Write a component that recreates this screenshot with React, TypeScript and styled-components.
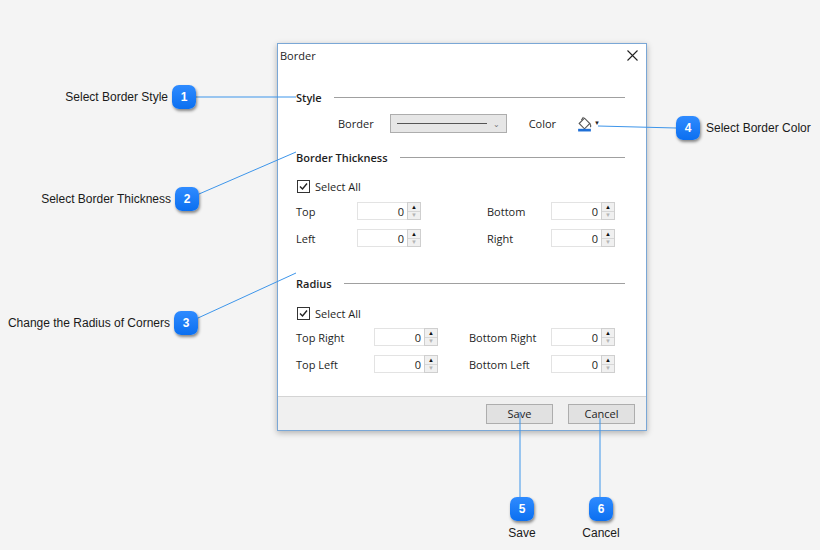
import React from 'react';
import styled, { createGlobalStyle } from 'styled-components';

const GlobalStyle = createGlobalStyle`
  html, body { margin: 0; padding: 0; background: #f4f4f4; }
  body { font-family: "Liberation Sans", Arial, sans-serif; }
  * { box-sizing: border-box; }
`;

const Canvas = styled.div`
  position: relative;
  width: 820px;
  height: 550px;
  background: #f4f4f4;
  overflow: hidden;
`;

const Lines = styled.svg`
  position: absolute;
  left: 0;
  top: 0;
  pointer-events: none;
  z-index: 2;
`;

const Window = styled.div`
  position: absolute;
  left: 277px;
  top: 43px;
  width: 370px;
  height: 388px;
  background: #fff;
  border: 1px solid #7aa7d6;
  box-shadow: 0 2px 6px rgba(0, 0, 0, 0.28);
  display: flex;
  flex-direction: column;
  font-family: "Open Sans", "Noto Sans", sans-serif;
  font-size: 11px;
  color: #1e1e1e;
`;

const TitleBar = styled.div`
  height: 22px;
  display: flex;
  align-items: center;
  justify-content: space-between;
  padding: 0 8px 0 2px;
  font-size: 11px;
`;

const Body = styled.div`
  flex: 1;
  padding: 0 21px 0 18px;
  display: flex;
  flex-direction: column;
`;

const SectionHeader = styled.div<{ mt: number }>`
  margin-top: ${p => p.mt}px;
  height: 16px;
  display: flex;
  align-items: center;
  gap: 12px;
  font-weight: 600;
  font-size: 11px;
  &::after {
    content: '';
    flex: 1;
    height: 1px;
    background: #a0a0a0;
  }
`;

const StyleRow = styled.div`
  margin-top: 8px;
  height: 20px;
  display: flex;
  align-items: center;
  padding-left: 42px;
`;

const Combo = styled.div`
  width: 117px;
  height: 19px;
  margin-left: 16px;
  background: #e6e6e6;
  border: 1px solid #adadad;
  display: flex;
  align-items: center;
  padding: 0 6px;
  gap: 6px;
  &::before {
    content: '';
    flex: 1;
    height: 1px;
    background: #555;
  }
`;

const Caret = styled.span`
  font-size: 8px;
  color: #777;
`;

const ColorLabel = styled.span`
  margin-left: 22px;
`;

const PaintBtn = styled.div`
  margin-left: 20px;
  display: flex;
  align-items: center;
  gap: 1px;
`;

const CheckRow = styled.label<{ mt: number }>`
  margin-top: ${p => p.mt}px;
  height: 16px;
  display: flex;
  align-items: center;
  gap: 5px;
  padding-left: 1px;
`;

const Box = styled.span`
  width: 13px;
  height: 13px;
  border: 1px solid #333;
  display: flex;
  align-items: center;
  justify-content: center;
  background: #fff;
`;

const Grid = styled.div<{ cols: string; mt: number }>`
  margin-top: ${p => p.mt}px;
  display: grid;
  grid-template-columns: ${p => p.cols};
  grid-auto-rows: 20px;
  row-gap: 7px;
  align-items: center;
`;

const Spin = styled.div`
  display: flex;
  height: 18px;
`;

const SpinInput = styled.div`
  width: 50px;
  border: 1px solid #e3e3e3;
  border-right: none;
  display: flex;
  align-items: center;
  justify-content: flex-end;
  padding-right: 3px;
`;

const SpinButtons = styled.div`
  width: 14px;
  display: flex;
  flex-direction: column;
  border: 1px solid #cfcfcf;
`;

const SpinArrow = styled.div<{ disabled?: boolean }>`
  flex: 1;
  display: flex;
  align-items: center;
  justify-content: center;
  background: #f0f0f0;
  font-size: 6px;
  line-height: 1;
  color: ${p => (p.disabled ? '#b5b5b5' : '#111')};
  & + & { border-top: 1px solid #d6d6d6; }
`;

const Footer = styled.div`
  height: 34px;
  background: #f0f0f0;
  border-top: 1px solid #d4d4d4;
  display: flex;
  align-items: center;
  justify-content: flex-end;
  gap: 15px;
  padding-right: 11px;
`;

const Button = styled.div`
  width: 67px;
  height: 20px;
  border: 1px solid #adadad;
  background: #e1e1e1;
  display: flex;
  align-items: center;
  justify-content: center;
`;

const Badge = styled.div<{ x: number; y: number }>`
  position: absolute;
  left: ${p => p.x - 12}px;
  top: ${p => p.y - 12}px;
  width: 24px;
  height: 24px;
  border-radius: 7px;
  background: linear-gradient(#2f8bff, #0b6ff0);
  box-shadow: 1px 2px 3px rgba(0, 0, 0, 0.45);
  color: #fff;
  font-size: 12px;
  font-weight: bold;
  display: flex;
  align-items: center;
  justify-content: center;
  z-index: 3;
`;

const Callout = styled.div<{ x: number; y: number; align?: 'right' | 'left' | 'center' }>`
  position: absolute;
  top: ${p => p.y - 8}px;
  left: ${p => p.x}px;
  transform: ${p => (p.align === 'right' ? 'translateX(-100%)' : p.align === 'center' ? 'translateX(-50%)' : 'none')};
  font-size: 12px;
  line-height: 16px;
  color: #1a1a1a;
  white-space: nowrap;
`;

const Spinner = ({ value }: { value: number }) => (
  <Spin>
    <SpinInput>{value}</SpinInput>
    <SpinButtons>
      <SpinArrow>▲</SpinArrow>
      <SpinArrow disabled>▼</SpinArrow>
    </SpinButtons>
  </Spin>
);

const Check = () => (
  <Box>
    <svg width="9" height="9" viewBox="0 0 9 9">
      <path d="M1 4.5 L3.5 7 L8 1.5" fill="none" stroke="#222" strokeWidth="1.4" />
    </svg>
  </Box>
);

const lines: [number, number, number, number][] = [
  [196, 97, 296, 97],
  [199, 194, 296, 152],
  [198, 318, 296, 273],
  [598, 126, 676, 128],
  [520, 412, 520, 497],
  [600, 418, 600, 497],
];

const App: React.FC = () => (
  <Canvas>
    <GlobalStyle />
    <Window>
      <TitleBar>
        <span>Border</span>
        <svg width="11" height="11" viewBox="0 0 11 11">
          <path d="M0.5 0.5 L10.5 10.5 M10.5 0.5 L0.5 10.5" stroke="#222" strokeWidth="1.1" />
        </svg>
      </TitleBar>
      <Body>
        <SectionHeader mt={23}>Style</SectionHeader>
        <StyleRow>
          <span>Border</span>
          <Combo>
            <Caret>⌄</Caret>
          </Combo>
          <ColorLabel>Color</ColorLabel>
          <PaintBtn>
            <svg width="17" height="17" viewBox="0 0 16 16">
              <path d="M3 8 L8 3 L13 8 L8 13 Z" fill="#fff" stroke="#555" strokeWidth="1" />
              <path d="M5 5 L7 2" stroke="#555" strokeWidth="1" />
              <path d="M13 8 Q14.5 10.5 13.5 11.5" fill="none" stroke="#555" />
              <rect x="2" y="13" width="12" height="2.5" fill="#1f6fd6" />
            </svg>
            <Caret style={{ color: '#222', fontSize: 6 }}>▼</Caret>
          </PaintBtn>
        </StyleRow>

        <SectionHeader mt={16}>Border Thickness</SectionHeader>
        <CheckRow mt={13}>
          <Check />
          Select All
        </CheckRow>
        <Grid cols="61px 64px 66px 64px 64px" mt={7}>
          <span>Top</span>
          <Spinner value={0} />
          <span />
          <span>Bottom</span>
          <Spinner value={0} />
          <span>Left</span>
          <Spinner value={0} />
          <span />
          <span>Right</span>
          <Spinner value={0} />
        </Grid>

        <SectionHeader mt={27}>Radius</SectionHeader>
        <CheckRow mt={14}>
          <Check />
          Select All
        </CheckRow>
        <Grid cols="78px 64px 31px 82px 64px" mt={6}>
          <span>Top Right</span>
          <Spinner value={0} />
          <span />
          <span>Bottom Right</span>
          <Spinner value={0} />
          <span>Top Left</span>
          <Spinner value={0} />
          <span />
          <span>Bottom Left</span>
          <Spinner value={0} />
        </Grid>
      </Body>
      <Footer>
        <Button>Save</Button>
        <Button>Cancel</Button>
      </Footer>
    </Window>

    <Lines width="820" height="550">
      {lines.map(([x1, y1, x2, y2], i) => (
        <line key={i} x1={x1} y1={y1} x2={x2} y2={y2} stroke="#3d95ea" strokeWidth="1" />
      ))}
    </Lines>

    <Badge x={184} y={97}>1</Badge>
    <Badge x={187} y={199}>2</Badge>
    <Badge x={186} y={323}>3</Badge>
    <Badge x={688} y={128}>4</Badge>
    <Badge x={522} y={509}>5</Badge>
    <Badge x={601} y={509}>6</Badge>

    <Callout x={168} y={97} align="right">Select Border Style</Callout>
    <Callout x={171} y={199} align="right">Select Border Thickness</Callout>
    <Callout x={170} y={323} align="right">Change the Radius of Corners</Callout>
    <Callout x={706} y={128}>Select Border Color</Callout>
    <Callout x={522} y={533} align="center">Save</Callout>
    <Callout x={601} y={533} align="center">Cancel</Callout>
  </Canvas>
);

export default App;
